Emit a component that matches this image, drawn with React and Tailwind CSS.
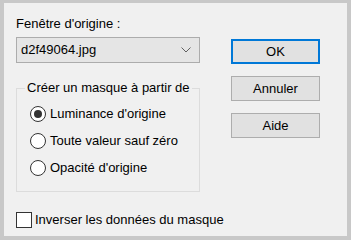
import React from "react";

function Radio({ checked, label }) {
  return (
    <div className="flex items-center h-[16px]">
      <div className="w-[16px] h-[16px] rounded-full border border-[#333333] bg-white flex items-center justify-center shrink-0">
        {checked && <div className="w-[8px] h-[8px] rounded-full bg-[#333333]" />}
      </div>
      <span className="ml-[4px] leading-[16px]">{label}</span>
    </div>
  );
}

function Button({ children, primary, className = "" }) {
  return (
    <div
      className={
        "h-[25px] w-[89px] flex items-center justify-center bg-[#e1e1e1] leading-[16px] " +
        (primary ? "border-2 border-[#0078d7] " : "border border-[#adadad] ") +
        className
      }
    >
      {children}
    </div>
  );
}

export default function App() {
  return (
    <div
      className="w-[351px] h-[240px] bg-[#c8c8c8] pt-[3px] pl-[4px] pr-[4px] pb-[4px] text-[13px] text-black"
      style={{ fontFamily: '"Liberation Sans", Arial, sans-serif' }}
    >
      <div className="h-full bg-[#f0f0f0] pl-[12px] pt-[13px]">
        <div className="flex">
          <div className="w-[184px]">
            <div className="leading-[16px]">Fenêtre d'origine :</div>
            <div className="mt-[5px] h-[26px] bg-[#e5e5e5] border border-[#acacac] flex items-center justify-between pl-[4px] pr-[8px]">
              <span className="leading-[16px]">d2f49064.jpg</span>
              <svg width="10" height="6" viewBox="0 0 10 6" className="block">
                <path d="M0.5 0.5 L5 5 L9.5 0.5" fill="none" stroke="#606060" strokeWidth="1" />
              </svg>
            </div>
            <fieldset className="mt-[17px] border border-[#dcdcdc] pb-[15px] min-w-0">
              <legend className="ml-[8px] px-[2px] leading-[16px]">Créer un masque à partir de</legend>
              <div className="pl-[13px] pt-[10px] flex flex-col gap-[11px]">
                <Radio checked label="Luminance d'origine" />
                <Radio label="Toute valeur sauf zéro" />
                <Radio label="Opacité d'origine" />
              </div>
            </fieldset>
          </div>
          <div className="ml-[31px] pt-[23px] flex flex-col gap-[12px]">
            <Button primary>OK</Button>
            <Button>Annuler</Button>
            <Button>Aide</Button>
          </div>
        </div>
        <div className="mt-[20px] flex items-center h-[16px]">
          <div className="w-[16px] h-[16px] border border-[#333333] bg-white shrink-0" />
          <span className="ml-[3px] leading-[16px]">Inverser les données du masque</span>
        </div>
      </div>
    </div>
  );
}
